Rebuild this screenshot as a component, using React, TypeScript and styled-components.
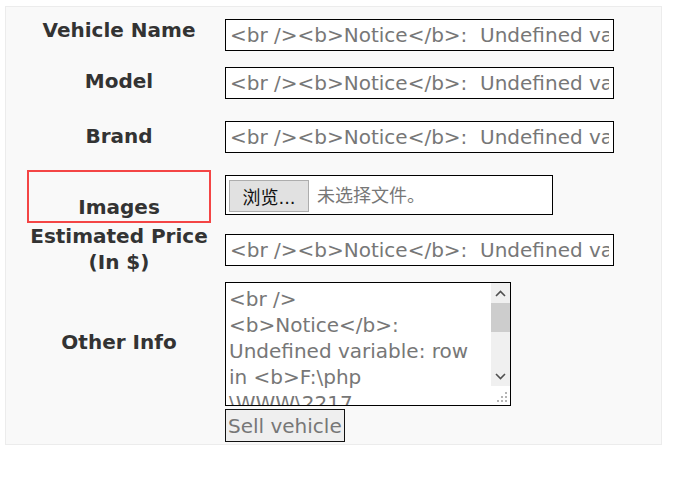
import React from "react";
import styled, { createGlobalStyle } from "styled-components";

const GlobalStyle = createGlobalStyle`
  body {
    margin: 0;
    background: #fff;
    font-family: "DejaVu Sans", Verdana, sans-serif;
  }
`;

const Panel = styled.form`
  margin: 6px 0 0 5px;
  width: 657px;
  box-sizing: border-box;
  background: #f9f9f9;
  border: 1px solid #ececec;
  padding: 12px 0 2px 0;
  display: flex;
  flex-direction: column;
`;

const Row = styled.div<{ $gap: number }>`
  display: grid;
  grid-template-columns: 219px 1fr;
  align-items: start;
  margin-top: ${(p) => p.$gap}px;
`;

const Label = styled.label<{ $shift?: number; $flagged?: boolean }>`
  display: flex;
  justify-content: center;
  align-items: flex-end;
  padding-left: 7px;
  margin-top: ${(p) => p.$shift ?? 0}px;
  font-family: "DejaVu Sans", Verdana, sans-serif;
  font-weight: bold;
  font-size: 20px;
  line-height: 26px;
  color: #333;
  text-align: center;

  span {
    display: flex;
    justify-content: center;
    align-items: flex-end;
    box-sizing: border-box;
    ${(p) =>
      p.$flagged
        ? `width: 184px; height: 53px; border: 2px solid #f44545; padding-bottom: 1px;`
        : ``}
  }
`;

const Field = styled.div<{ $shift?: number }>`
  display: flex;
  flex-direction: column;
  align-items: flex-start;
  gap: 3px;
  margin-top: ${(p) => p.$shift ?? 0}px;
`;

const TextInput = styled.input`
  width: 389px;
  height: 32px;
  box-sizing: border-box;
  border: 1px solid #000;
  padding: 0 4px;
  background: #fff;
  font-family: "DejaVu Sans", Verdana, sans-serif;
  font-size: 20px;
  color: #777;
  outline: none;
`;

const FileBox = styled.label`
  display: flex;
  align-items: flex-start;
  gap: 8px;
  width: 328px;
  height: 40px;
  box-sizing: border-box;
  border: 1px solid #000;
  padding: 4px 3px 0;
  background: #fff;
  font-family: "DejaVu Sans", "Noto Sans CJK SC", sans-serif;
  font-size: 18px;

  input {
    display: none;
  }
`;

const BrowseButton = styled.span`
  display: flex;
  align-items: center;
  justify-content: center;
  width: 80px;
  height: 32px;
  box-sizing: border-box;
  background: #e1e1e1;
  border: 1px solid #adadad;
  color: #111;
`;

const FileName = styled.span`
  line-height: 32px;
  color: #777;
`;

const NotesWrap = styled.div`
  position: relative;
  width: 286px;
  height: 124px;
`;

const Notes = styled.textarea`
  display: block;
  width: 100%;
  height: 100%;
  box-sizing: border-box;
  border: 1px solid #000;
  padding: 3px 22px 3px 3px;
  background: #fff;
  font-family: "DejaVu Sans", Verdana, sans-serif;
  font-size: 20px;
  line-height: 26px;
  color: #777;
  resize: none;
  overflow: hidden;
  outline: none;
`;

/* classic scrollbar drawn over the textarea's right edge */
const ScrollTrack = styled.div`
  position: absolute;
  top: 1px;
  right: 1px;
  width: 19px;
  height: 103px;
  display: flex;
  flex-direction: column;
  background: #f0f0f0;
`;

const ScrollArrow = styled.div`
  height: 20px;
  display: flex;
  align-items: center;
  justify-content: center;
`;

const ScrollThumb = styled.div`
  height: 29px;
  background: #cdcdcd;
`;

const ScrollRest = styled.div`
  flex: 1;
`;

const Grip = styled.svg`
  position: absolute;
  right: 1px;
  bottom: 1px;
  width: 19px;
  height: 19px;
  background: #fff;
`;

const SellButton = styled.button`
  height: 33px;
  box-sizing: border-box;
  padding: 0 2px;
  border: 1px solid #111;
  background: #efefef;
  font-family: "DejaVu Sans", Verdana, sans-serif;
  font-size: 20px;
  color: #777;
`;

const notice = "<br /><b>Notice</b>:  Undefined variable: row in <b>F:\\php\\WWW\\2217\\sell.php</b> on line <b>48</b><br />";

const otherInfo =
  "<br />\n<b>Notice</b>:  Undefined variable: row in <b>F:\\php\n\\WWW\\2217\n\\sell.php</b> on line <b>64</b><br />\n";

const fields = [
  { name: "Vehicle Name", gap: 0, shift: -2 },
  { name: "Model", gap: 16, shift: 1 },
  { name: "Brand", gap: 22, shift: 2 },
];

const App = () => {
  return (
    <>
      <GlobalStyle />
      <Panel onSubmit={(e) => e.preventDefault()}>
        {fields.map((f) => (
          <Row $gap={f.gap} key={f.name}>
            <Label $shift={f.shift}>{f.name}</Label>
            <TextInput defaultValue={notice} />
          </Row>
        ))}
        <Row $gap={17}>
          <Label $flagged>
            <span>Images</span>
          </Label>
          <Field $shift={5}>
            <FileBox>
              <input type="file" />
              <BrowseButton>浏览...</BrowseButton>
              <FileName>未选择文件。</FileName>
            </FileBox>
          </Field>
        </Row>
        <Row $gap={0}>
          <Label>
            Estimated Price
            <br />
            (In $)
          </Label>
          <Field $shift={11}>
            <TextInput defaultValue={notice} />
          </Field>
        </Row>
        <Row $gap={7}>
          <Label $shift={47}>Other Info</Label>
          <Field>
            <NotesWrap>
              <Notes defaultValue={otherInfo} />
              <ScrollTrack>
                <ScrollArrow>
                  <svg width="11" height="7" viewBox="0 0 11 7">
                    <path d="M1 6 L5.5 1.5 L10 6" fill="none" stroke="#505050" strokeWidth="1.6" />
                  </svg>
                </ScrollArrow>
                <ScrollThumb />
                <ScrollRest />
                <ScrollArrow>
                  <svg width="11" height="7" viewBox="0 0 11 7">
                    <path d="M1 1 L5.5 5.5 L10 1" fill="none" stroke="#505050" strokeWidth="1.6" />
                  </svg>
                </ScrollArrow>
              </ScrollTrack>
              <Grip viewBox="0 0 19 19">
                <g fill="#b4b4b4">
                  <rect x="14" y="6" width="2" height="2" />
                  <rect x="10" y="10" width="2" height="2" />
                  <rect x="14" y="10" width="2" height="2" />
                  <rect x="6" y="14" width="2" height="2" />
                  <rect x="10" y="14" width="2" height="2" />
                  <rect x="14" y="14" width="2" height="2" />
                </g>
              </Grip>
            </NotesWrap>
            <SellButton type="submit">Sell vehicle</SellButton>
          </Field>
        </Row>
      </Panel>
    </>
  );
};

export default App;
